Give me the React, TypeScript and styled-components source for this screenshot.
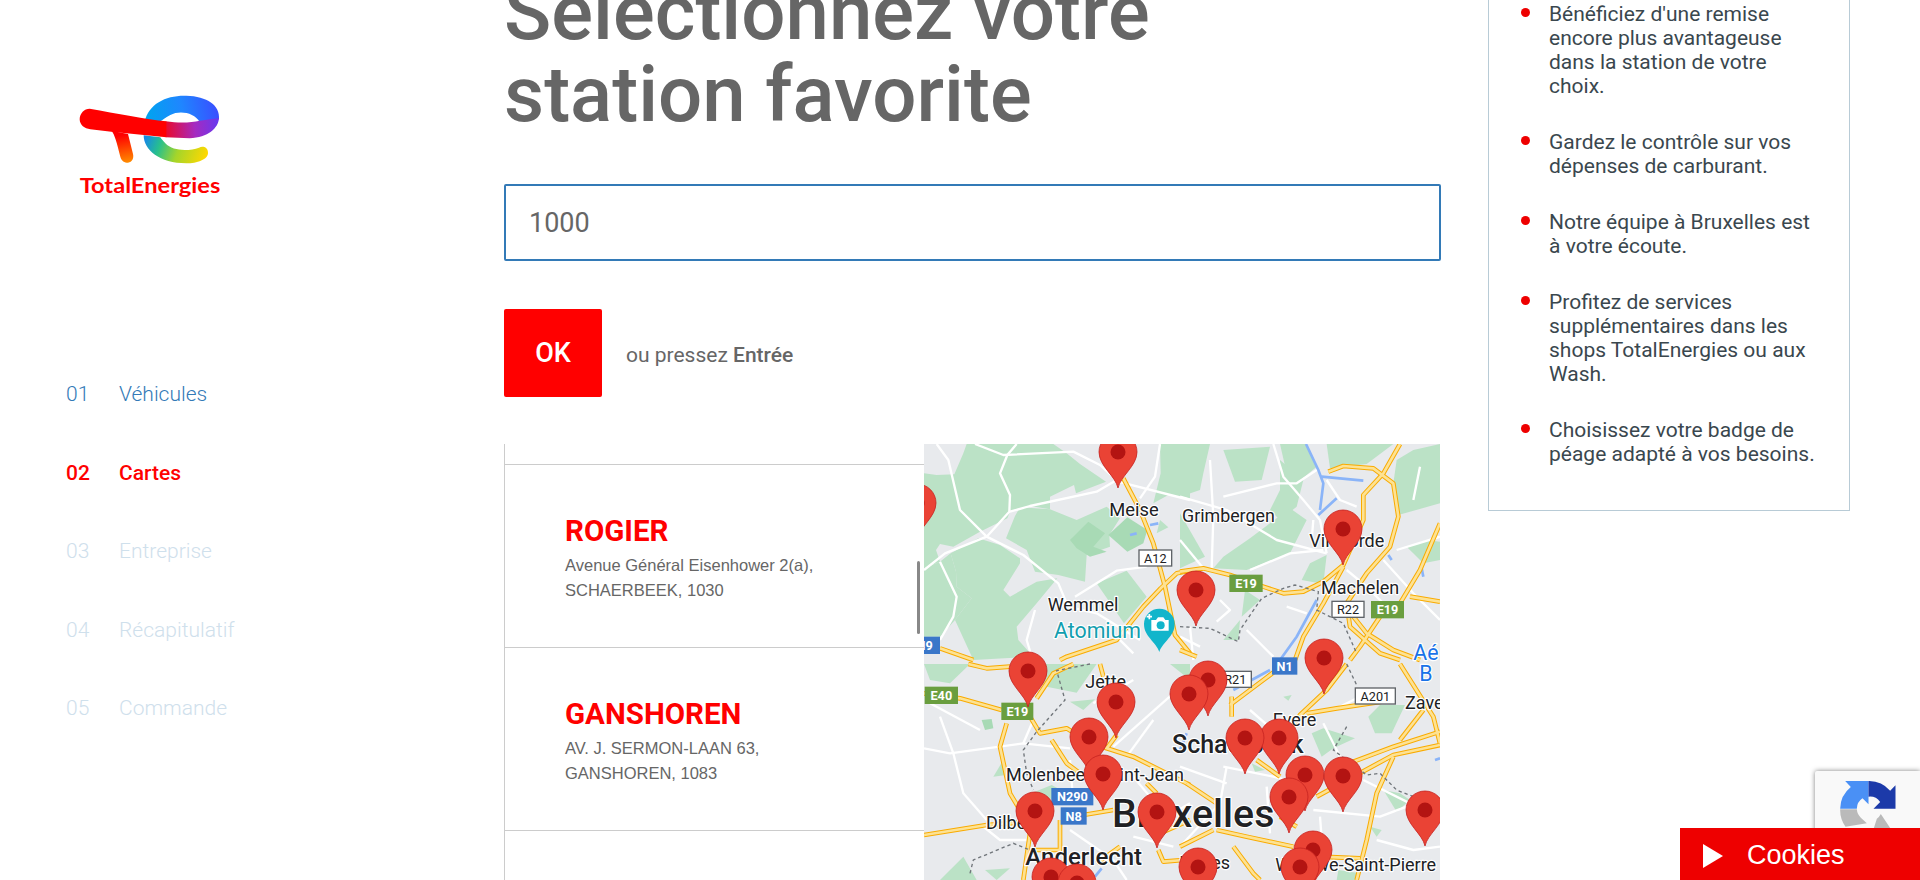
import React from "react";
import styled, { createGlobalStyle } from "styled-components";

const Global = createGlobalStyle`
  html, body { margin: 0; padding: 0; height: 880px; overflow: hidden; background: #fff; }
  body { font-family: Roboto, "Liberation Sans", sans-serif; }
  * { box-sizing: border-box; }
`;

const Page = styled.div`
  display: grid;
  grid-template-columns: 504px 937px 362px;
  column-gap: 0;
  height: 880px;
  overflow: hidden;
`;

const Sidebar = styled.aside`
  display: flex;
  flex-direction: column;
  padding-left: 66px;
`;

const LogoBox = styled.div`
  margin: 95px 0 0 13px;
  height: 104px;
`;

const Nav = styled.nav`
  display: flex;
  flex-direction: column;
  margin-top: 183px;
`;

const NavRow = styled.div<{ $state: "done" | "active" | "todo" }>`
  display: grid;
  grid-template-columns: 53px 1fr;
  height: 78.5px;
  line-height: 24px;
  font-size: 21px;
  font-weight: ${(p) => (p.$state === "active" ? 500 : 300)};
  color: ${(p) => (p.$state === "done" ? "#337ab7" : p.$state === "active" ? "#ff0000" : "#cfe0ec")};
`;

const Main = styled.main`
  display: flex;
  flex-direction: column;
`;

const Title = styled.h1`
  margin: -28px 0 48px;
  font-size: 78px;
  line-height: 82px;
  font-weight: 500;
  color: #666;
`;

const SearchInput = styled.input`
  width: 937px;
  height: 77px;
  padding: 0 23px;
  border: 2px solid #337ab7;
  border-radius: 2px;
  font: 400 27px Roboto, sans-serif;
  color: #666;
  outline: none;
`;

const ActionRow = styled.div`
  display: flex;
  align-items: center;
  gap: 24px;
  margin: 48px 0 47px;
`;

const OkButton = styled.button`
  width: 98px;
  height: 88px;
  border: 0;
  border-radius: 2px;
  background: #ff0000;
  color: #fff;
  font: 500 27px Roboto, sans-serif;
`;

const Hint = styled.span`
  font-size: 21px;
  color: #666;
  margin-top: 4px;
  strong { font-weight: 500; }
`;

const Finder = styled.section`
  display: grid;
  grid-template-columns: 420px 516px;
  height: 436px;
`;

const StationList = styled.div`
  position: relative;
  display: flex;
  flex-direction: column;
  border-left: 1px solid #ccc;
  overflow: hidden;
`;

const StubRow = styled.div`
  flex: none;
  height: 21px;
  border-bottom: 1px solid #ccc;
`;

const StationRow = styled.div`
  flex: none;
  height: 183px;
  padding: 49px 0 0 60px;
  border-bottom: 1px solid #ccc;
`;

const StationName = styled.div`
  font-size: 29.5px;
  line-height: 34px;
  font-weight: 700;
  color: #ff0000;
  margin-bottom: 5px;
`;

const StationAddress = styled.div`
  font-family: "Liberation Sans", Arial, sans-serif;
  font-size: 16.5px;
  line-height: 25px;
  color: #666;
`;

const ScrollThumb = styled.div`
  position: absolute;
  left: 412px;
  top: 117px;
  width: 3px;
  height: 73px;
  border-radius: 2px;
  background: #888;
`;

const MapSvg = styled.svg`
  display: block;
  width: 516px;
  height: 436px;
  background: #e8eaed;
  font-family: Roboto, sans-serif;
`;

const MapLabel = styled.text<{ $size: number; $weight?: number; $color?: string }>`
  font-size: ${(p) => p.$size}px;
  font-weight: ${(p) => p.$weight ?? 400};
  fill: ${(p) => p.$color ?? "#202124"};
  stroke: #fff;
  stroke-width: 7px;
  stroke-linejoin: round;
  paint-order: stroke;
`;

const ShieldText = styled.text<{ $light?: boolean }>`
  font-size: 38px;
  font-weight: ${(p) => (p.$light ? 700 : 400)};
  fill: ${(p) => (p.$light ? "#fff" : "#202124")};
  text-anchor: middle;
`;

const Aside = styled.aside`
  align-self: start;
  margin: -40px 0 0 47px;
  width: 362px;
  padding: 41px 32px 44px 32px;
  border: 1px solid #b8cbd6;
  list-style: none;
  display: flex;
  flex-direction: column;
  gap: 32px;
`;

const Benefit = styled.div`
  display: flex;
  gap: 19px;
  font-size: 21px;
  line-height: 24px;
  color: #3a474e;
`;

const Bullet = styled.span`
  flex: none;
  width: 9px;
  height: 9px;
  margin-top: 6px;
  border-radius: 50%;
  background: #ee0000;
`;

const Recaptcha = styled.div`
  position: fixed;
  right: 0;
  top: 771px;
  width: 105px;
  height: 109px;
  padding: 10px 0 0 25px;
  background: #f9f9f9;
  border-radius: 2px 0 0 0;
  box-shadow: 0 0 5px rgba(0, 0, 0, 0.5);
`;

const CookieBar = styled.div`
  position: fixed;
  right: 0;
  bottom: 0;
  width: 240px;
  height: 52px;
  display: flex;
  align-items: center;
  gap: 24px;
  padding: 2px 0 0 23px;
  background: #ee0000;
  color: #fff;
  font: 400 27px "Liberation Sans", Arial, sans-serif;
`;

const Triangle = styled.span`
  width: 0;
  height: 0;
  margin-top: 2px;
  border-left: 20px solid #fff;
  border-top: 12px solid transparent;
  border-bottom: 12px solid transparent;
`;

function Logo() {
  return (
    <svg width="142" height="104" viewBox="238 105 426 312" aria-label="TotalEnergies">
      <defs>
        <linearGradient id="tBlue" gradientUnits="userSpaceOnUse" x1="440" y1="170" x2="655" y2="130">
          <stop offset="0" stopColor="#00a4ef" />
          <stop offset="0.5" stopColor="#1f86ff" />
          <stop offset="1" stopColor="#3a4dff" />
        </linearGradient>
        <linearGradient id="tMid" gradientUnits="userSpaceOnUse" x1="500" y1="210" x2="655" y2="200">
          <stop offset="0" stopColor="#e80b2f" />
          <stop offset="0.55" stopColor="#a62ac0" />
          <stop offset="1" stopColor="#6a38ee" />
        </linearGradient>
        <linearGradient id="tLow" gradientUnits="userSpaceOnUse" x1="440" y1="225" x2="620" y2="290">
          <stop offset="0" stopColor="#1689e6" />
          <stop offset="0.25" stopColor="#28c08c" />
          <stop offset="0.55" stopColor="#a5d52a" />
          <stop offset="1" stopColor="#ffd800" />
        </linearGradient>
        <linearGradient id="tStem" gradientUnits="userSpaceOnUse" x1="370" y1="225" x2="385" y2="308">
          <stop offset="0" stopColor="#ff0000" />
          <stop offset="1" stopColor="#ff8c00" />
        </linearGradient>
      </defs>
      <path fill="url(#tBlue)" d="M435,185 C448,130 500,105 560,107 C622,109 662,135 658,178 L600,186 C585,158 540,150 512,165 C498,172 490,180 480,185 Z" />
      <path fill="url(#tMid)" d="M498,184 C540,190 575,188 600,182 L658,174 C656,205 625,232 570,235 L498,232 Z" />
      <path fill="url(#tLow)" d="M432,226 C432,270 480,310 560,310 C592,310 626,298 625,278 C625,262 610,257 598,263 C570,273 520,275 497,250 C490,242 486,238 482,232 Z" />
      <path fill="url(#tStem)" d="M335,212 C345,222 352,250 362,290 C365,303 375,308 385,308 C398,306 403,295 400,282 L385,222 Z" />
      <path fill="#ff0000" d="M270,146 C254,146 240,160 240,178 C240,195 255,206 272,208 L335,215 L500,232 L500,184 C440,178 350,160 270,146 Z" />
      <text x="240" y="400" fill="#ff0000" fontFamily="Lato, Roboto, sans-serif" fontWeight="700" fontSize="60" textLength="422" lengthAdjust="spacingAndGlyphs">TotalEnergies</text>
    </svg>
  );
}

type Pts = string;
const greens: Record<string, Pts[]> = {
  a: [
    "12,100 50,105 103,103 130,40 140,12 400,12 440,40 480,72 558,125 468,160 462,135 390,170 390,208 330,198 270,215 262,235 180,275 100,320 60,312 48,330 60,365 12,385",
    "285,228 300,202 390,208 470,240 560,200 600,235 568,285 570,320 500,345 495,425 415,405 345,395 320,330 258,295",
    "92,340 175,295 240,315 300,355 300,370 250,450 270,470 350,425 412,415 350,490 290,560 295,600 340,650 160,660 105,540 155,475 110,440 108,395",
    "12,385 60,365 92,340 108,395 110,440 155,475 105,540 60,590 12,590",
    "530,430 620,392 680,470 612,550",
    "720,12 810,12 810,180 745,165 700,190 722,100",
    "710,280 745,262 720,240",
  ],
  b: [
    "0,12 90,12 70,100 60,150 0,170",
    "130,30 270,20 245,120 165,125",
    "300,12 380,12 410,80 350,130 320,100",
    "300,60 370,120 350,200 300,240 270,210 300,150",
    "440,12 640,12 560,72 450,85",
    "650,60 700,30 780,12 780,190 655,225 640,130",
    "0,220 75,350 0,385",
    "100,385 130,350 210,295 270,250 330,205 380,240 330,340 200,390",
    "365,420 390,370 440,345 430,432",
    "195,450 240,480 185,530",
    "680,320 740,300 780,305 780,360 730,370",
    "130,600 180,540 175,600",
  ],
  c: [
    "12,12 150,12 90,70 30,60",
    "340,12 530,12 470,98 380,80 340,60",
    "450,125 525,118 490,150",
    "220,350 250,300 258,345",
    "345,395 395,375 440,400 420,430",
    "60,660 130,590 170,660",
    "195,630 270,625 230,660",
    "750,12 810,12 810,60",
    "410,12 520,12 480,40",
  ],
  d: [
    "395,220 430,205 525,235 460,265 425,290",
    "565,170 600,135 675,135 635,220 585,220",
    "610,390 660,400 690,420 650,455",
    "570,500 605,510 590,530",
    "215,310 255,330 225,335",
    "310,110 335,105 325,122",
    "475,630 540,640 530,660 470,660",
  ],
};

const darkGreens: Record<string, Pts[]> = {
  a: [
    "565,285 622,232 682,270 670,310 622,335",
    "450,300 505,245 555,280 520,320 560,335 510,350 470,325",
  ],
  b: [],
  c: ["185,180 215,177 220,205 195,210"],
  d: [],
};

const whites: Record<string, string[]> = {
  a: [
    "M165,12 L250,45 L460,35 L540,75 L595,125 L810,180",
    "M290,12 L262,45 L240,100 L270,165 L268,215 L200,290 L75,340 L12,390",
    "M50,12 L85,60 L120,210 L200,290 L310,345 L415,430 L440,490",
    "M590,120 L530,155 L330,198 L270,215",
    "M60,365 L110,470 L100,530 L60,600",
    "M465,470 L590,392 L680,380",
    "M345,510 L320,600 L335,650",
    "M720,12 L705,110 L660,175",
    "M400,490 L530,520 L660,600",
    "M590,590 L640,640",
  ],
  b: [
    "M0,170 L140,210 L290,300 L440,340",
    "M280,12 L310,110 L370,180 L420,240 L440,340",
    "M90,60 L100,230 L95,385",
    "M130,170 L290,130 L350,130 L410,90",
    "M0,300 L70,385",
    "M210,390 L330,340 L430,330",
    "M400,240 L395,300",
    "M440,120 L480,180 L530,200",
    "M720,80 L700,180",
    "M610,360 L700,460 L780,540",
    "M650,330 L780,290",
    "M500,390 L560,440 L610,490",
    "M120,480 L150,510 L110,545",
    "M30,560 L40,660",
    "M320,500 L380,520",
    "M60,620 L0,590",
    "M200,570 L280,650",
  ],
  c: [
    "M12,265 L90,280 L310,250 L450,265",
    "M60,170 L100,280 L130,400 L200,480",
    "M450,510 L580,600 L620,660",
    "M640,60 L520,130",
    "M700,180 L620,290",
    "M30,130 L180,210",
    "M310,250 L340,180",
    "M190,500 L240,540 L320,540",
    "M450,300 L460,430",
    "M580,260 L760,100",
    "M640,350 L740,470 L810,430",
    "M760,560 L640,530",
  ],
  d: [
    "M130,320 L280,350 L400,380",
    "M400,450 L600,470 L680,440",
    "M430,190 L480,290",
    "M550,360 L690,430 L780,480",
    "M140,320 L120,430 L0,560",
    "M260,380 L270,520",
    "M0,320 L140,370",
    "M420,470 L430,600",
    "M590,540 L700,570 L780,560",
    "M210,150 L290,220",
    "M460,150 L580,90",
  ],
};

const highways: Record<string, string[]> = {
  a: [
    "M610,115 L660,210 L700,310 L735,440 L765,585 L810,640",
    "M810,392 L770,400 L722,445 L670,500 L590,600 L440,650 L420,660",
    "M60,625 L160,660",
  ],
  b: [
    "M0,395 L70,385 L150,405 L250,440 L310,460 L370,455 L430,425 L490,375 L550,240 L550,165 L610,100 L660,12",
    "M445,95 L490,78 L580,85 L640,130 L655,230 L630,320 L560,400 L500,490 L510,560 L600,640 L660,660",
    "M780,250 L720,390 L660,490 L600,530 L540,620 L510,660",
    "M345,660 L370,590 L430,490 L490,380",
    "M690,470 L780,485",
    "M520,530 L560,580 L640,630 L720,660",
    "M0,630 L50,650",
  ],
  c: [
    "M12,100 L120,115 L245,150",
    "M260,190 L240,260 L270,400 L300,450",
    "M330,170 L360,220 L440,205 L480,230 L560,265 L640,290 L810,375",
    "M395,240 L440,310 L480,340",
    "M12,525 L200,495 L330,485",
    "M490,465 L580,450",
    "M330,520 L310,660",
    "M420,480 L420,570 L340,570",
    "M540,12 L550,50",
    "M460,12 L400,40 L350,115",
    "M145,12 L200,25 L270,20",
    "M590,225 L560,265",
    "M680,370 L710,400",
    "M715,570 L730,605 L790,600",
    "M600,560 L530,610",
    "M810,480 L720,520",
  ],
  d: [
    "M500,12 L440,90 L360,165 L340,200",
    "M380,160 L470,145 L640,120",
    "M150,135 L250,60 L290,30",
    "M155,110 L155,170",
    "M660,12 L760,170 L780,250",
    "M780,215 L640,260 L520,305",
    "M780,255 L640,285 L410,410",
    "M230,300 L300,350",
    "M110,510 L200,530 L340,560",
    "M640,290 L590,400 L560,540 L530,660",
    "M420,590 L540,595",
    "M730,150 L660,240",
    "M20,370 L110,430",
    "M300,470 L350,500",
    "M0,560 L100,510",
    "M160,560 L220,640 L240,660",
  ],
};

const dashes: Record<string, string> = {
  a: "",
  b: "M0,560 L90,565 L175,605 L180,570 L245,475 L310,445 L345,435 L415,455 L410,510 L490,550 L530,640",
  c: "M510,12 L410,32 L435,120 L350,215 L310,270 L320,340 L340,390 M150,640 L160,600 L280,550 L330,570",
  d: "M500,12 L530,75 M500,200 L460,270 L560,345 L600,340 L650,390 L700,410",
};

const rivers: Record<string, string> = {
  a: "M630,285 L650,280 M690,255 L715,250",
  b: "M378,12 L415,90 L430,130 L420,210 M425,110 L550,122 M415,225 L470,175 M300,660 L350,590 L410,480 M625,345 L635,360 M725,385 L730,410",
  c: "M525,650 L545,625",
  d: "M160,90 L270,30 M20,220 L0,270 M765,300 L780,295",
};

const offsets: Record<string, string> = {
  a: "translate(0,0)",
  b: "translate(780,0)",
  c: "translate(0,660)",
  d: "translate(780,660)",
};

const pins: [number, number][] = [
  [917, 503], [1118, 452], [1343, 529], [1196, 590], [1324, 658], [1028, 671],
  [1208, 680], [1189, 694], [1116, 702], [1089, 737], [1279, 738], [1245, 738],
  [1103, 774], [1305, 775], [1343, 776], [1289, 797], [1035, 811], [1157, 812],
  [1425, 810], [1313, 850], [1300, 867], [1198, 867], [1051, 877], [1077, 883],
];

type ShieldProps = { x: number; y: number; w: number; label: string; kind: "green" | "blue" | "white" };
function Shield({ x, y, w, label, kind }: ShieldProps) {
  const fill = kind === "green" ? "#6a9e3f" : kind === "blue" ? "#3a77c9" : "#fff";
  const stroke = kind === "green" ? "#6a9e3f" : kind === "blue" ? "#3a77c9" : "#5f6368";
  return (
    <g>
      <rect x={x} y={y} width={w} height={48} fill={fill} stroke={stroke} strokeWidth={4} />
      <ShieldText x={x + w / 2} y={y + 38} $light={kind !== "white"}>{label}</ShieldText>
    </g>
  );
}

function MapView() {
  const layers = ["a", "b", "c", "d"];
  return (
    <MapSvg viewBox="12 12 1548 1308" preserveAspectRatio="none" aria-label="Carte">
      {layers.map((k) => (
        <g key={k} transform={offsets[k]}>
          {greens[k].map((p, i) => <polygon key={i} points={p} fill="#bbe2c6" />)}
          {darkGreens[k].map((p, i) => <polygon key={i} points={p} fill="#a8dab5" />)}
          <path d={rivers[k]} fill="none" stroke="#8ab4f8" strokeWidth={8} />
          {whites[k].map((d, i) => <path key={i} d={d} fill="none" stroke="#fff" strokeWidth={7} strokeLinejoin="round" />)}
        </g>
      ))}
      {layers.map((k) => (
        <g key={k} transform={offsets[k]}>
          {highways[k].map((d, i) => <path key={i} d={d} fill="none" stroke="#f9ab00" strokeWidth={14} strokeLinejoin="round" />)}
          {highways[k].map((d, i) => <path key={i} d={d} fill="none" stroke="#fde293" strokeWidth={8} strokeLinejoin="round" />)}
          {dashes[k] && <path d={dashes[k]} fill="none" stroke="#70757a" strokeWidth={4} strokeDasharray="10 9" />}
        </g>
      ))}

      <MapLabel x={568} y={227} $size={55}>Meise</MapLabel>
      <MapLabel x={786} y={247} $size={53.5}>Grimbergen</MapLabel>
      <MapLabel x={383} y={514} $size={54}>Wemmel</MapLabel>
      <MapLabel x={402} y={594} $size={64} $color="#129eaf">Atomium</MapLabel>
      <MapLabel x={1168} y={322} $size={54}>Vilvoorde</MapLabel>
      <MapLabel x={1203} y={463} $size={54}>Machelen</MapLabel>
      <MapLabel x={1480} y={660} $size={64} $color="#1a73e8">Aé</MapLabel>
      <MapLabel x={1498} y={724} $size={64} $color="#1a73e8">B</MapLabel>
      <MapLabel x={1455} y={806} $size={54}>Zaventem</MapLabel>
      <MapLabel x={496} y={745} $size={54}>Jette</MapLabel>
      <MapLabel x={1058} y={857} $size={54}>Evere</MapLabel>
      <MapLabel x={756} y={939} $size={75} $weight={500}>Schaerbeek</MapLabel>
      <MapLabel x={258} y={1024} $size={54}>Molenbeek-Saint-Jean</MapLabel>
      <MapLabel x={198} y={1168} $size={54}>Dilbeek</MapLabel>
      <MapLabel x={576} y={1160} $size={118} $weight={500}>Bruxelles</MapLabel>
      <MapLabel x={316} y={1276} $size={72} $weight={500}>Anderlecht</MapLabel>
      <MapLabel x={778} y={1288} $size={54}>Ixelles</MapLabel>
      <MapLabel x={1066} y={1292} $size={54}>Woluwe-Saint-Pierre</MapLabel>

      <Shield x={657} y={330} w={98} label="A12" kind="white" />
      <Shield x={930} y={406} w={96} label="E19" kind="green" />
      <Shield x={1236} y={484} w={96} label="R22" kind="white" />
      <Shield x={1355} y={485} w={95} label="E19" kind="green" />
      <Shield x={-30} y={592} w={88} label="N9" kind="blue" />
      <Shield x={16} y={742} w={96} label="E40" kind="green" />
      <Shield x={246} y={790} w={92} label="E19" kind="green" />
      <Shield x={898} y={694} w={96} label="R21" kind="white" />
      <Shield x={1058} y={654} w={72} label="N1" kind="blue" />
      <Shield x={1306} y={744} w={120} label="A201" kind="white" />
      <Shield x={396} y={1046} w={122} label="N290" kind="blue" />
      <Shield x={424} y={1104} w={74} label="N8" kind="blue" />

      <g>
        <path fill="#12b5cb" d="M718,636 C708,605 672,590 672,552 A46,46 0 0 1 764,552 C764,590 728,605 718,636 Z" />
        <path fill="#fff" d="M694,540 H708 L714,532 H730 L736,540 H746 V572 H694 Z" />
        <circle cx="722" cy="556" r="12" fill="#12b5cb" />
        <path d="M680,530 H696 M688,522 V538" stroke="#fff" strokeWidth="5" />
      </g>

      {pins.map(([px, py]) => (
        <g key={`${px}-${py}`} transform={`translate(${(px - 920) * 3},${(py - 440) * 3}) scale(3)`}>
          <path d="M0,36 C-2.5,24 -19,14 -19,0 A19,19 0 1 1 19,0 C19,14 2.5,24 0,36 Z" fill="#ea4335" stroke="#c5221f" strokeWidth="0.8" />
          <circle r="7.5" fill="#b31412" />
        </g>
      ))}
    </MapSvg>
  );
}

const steps: { n: string; label: string; state: "done" | "active" | "todo" }[] = [
  { n: "01", label: "Véhicules", state: "done" },
  { n: "02", label: "Cartes", state: "active" },
  { n: "03", label: "Entreprise", state: "todo" },
  { n: "04", label: "Récapitulatif", state: "todo" },
  { n: "05", label: "Commande", state: "todo" },
];

const benefits = [
  "Bénéficiez d'une remise encore plus avantageuse dans la station de votre choix.",
  "Gardez le contrôle sur vos dépenses de carburant.",
  "Notre équipe à Bruxelles est à votre écoute.",
  "Profitez de services supplémentaires dans les shops TotalEnergies ou aux Wash.",
  "Choisissez votre badge de péage adapté à vos besoins.",
];

export default function App() {
  return (
    <>
      <Global />
      <Page>
        <Sidebar>
          <LogoBox><Logo /></LogoBox>
          <Nav>
            {steps.map((s) => (
              <NavRow key={s.n} $state={s.state}>
                <span>{s.n}</span>
                <span>{s.label}</span>
              </NavRow>
            ))}
          </Nav>
        </Sidebar>
        <Main>
          <Title>Sélectionnez votre<br />station favorite</Title>
          <SearchInput defaultValue="1000" />
          <ActionRow>
            <OkButton>OK</OkButton>
            <Hint>ou pressez <strong>Entrée</strong></Hint>
          </ActionRow>
          <Finder>
            <StationList>
              <StubRow />
              <StationRow>
                <StationName>ROGIER</StationName>
                <StationAddress>Avenue Général Eisenhower 2(a),<br />SCHAERBEEK, 1030</StationAddress>
              </StationRow>
              <StationRow>
                <StationName>GANSHOREN</StationName>
                <StationAddress>AV. J. SERMON-LAAN 63,<br />GANSHOREN, 1083</StationAddress>
              </StationRow>
              <StationRow />
              <ScrollThumb />
            </StationList>
            <MapView />
          </Finder>
        </Main>
        <Aside>
          {benefits.map((b) => (
            <Benefit key={b}>
              <Bullet />
              <span>{b}</span>
            </Benefit>
          ))}
        </Aside>
      </Page>
      <Recaptcha>
        <svg width="57" height="70" viewBox="540 95 170 210" aria-hidden="true">
          <path fill="#4a90f5" d="M540,178 A85,85 0 0 1 572,113 L555,95 L625,95 L625,165 L607,147 A38,38 0 0 0 590,178 Z" />
          <path fill="#1c3aa9" d="M625,95 A85,85 0 0 1 690,124 L706,108 L706,178 L640,178 L660,158 A38,38 0 0 0 625,142 Z" />
          <path fill="#bababa" d="M540,180 H590 A38,38 0 0 0 602,205 L620,222 L556,232 A85,85 0 0 1 540,180 Z M650,208 A38,38 0 0 0 662,194 L690,236 V300 H556 V240 L640,240 Z" />
        </svg>
      </Recaptcha>
      <CookieBar>
        <Triangle />
        <span>Cookies</span>
      </CookieBar>
    </>
  );
}
